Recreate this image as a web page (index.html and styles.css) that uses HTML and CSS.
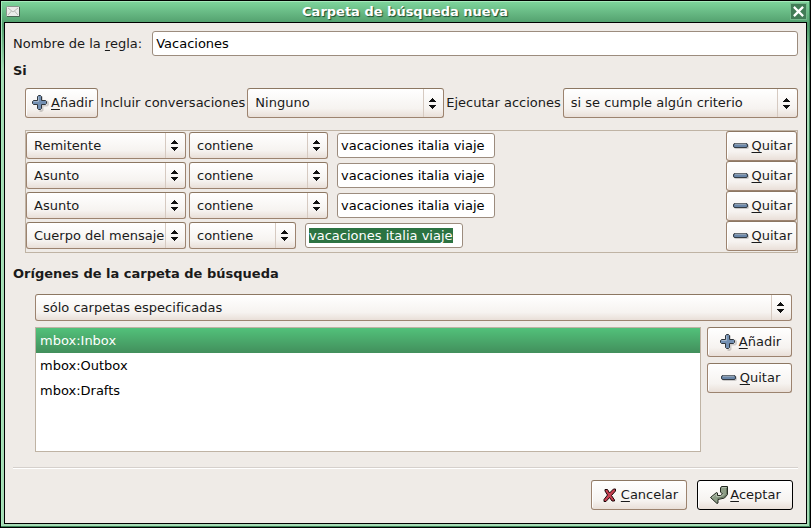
FILE: index.html
```html
<!DOCTYPE html>
<html lang="es">
<head>
<meta charset="utf-8">
<title>Carpeta de búsqueda nueva</title>
<link rel="stylesheet" href="styles.css">
</head>
<body>
<svg class="symbols" aria-hidden="true">
  <defs>
    <symbol id="plus" viewBox="0 0 18 18">
      <path d="M8 3.500h3v4h5l1 1v2l-1 1h-4.500V16l-1 1H8.500" fill="none" stroke="#000" stroke-opacity=".16" stroke-width="2"/>
      <path d="M7.500 1.500h2l1 1v4h4l1 1v2l-1 1h-4v4l-1 1h-2l-1-1v-4h-4l-1-1v-2l1-1h4v-4z" fill="#7390b3" stroke="#30363c"/>
      <path d="M7.500 3v4.500H3" fill="none" stroke="#a5b7cb"/>
    </symbol>
    <symbol id="minus" viewBox="0 0 18 18">
      <rect x="2" y="7" width="15" height="5" rx="2" fill="#000" fill-opacity=".18"/>
      <rect x="1.500" y="6.500" width="14" height="4" rx="1.500" fill="#6b87a9" stroke="#343b43"/>
      <path d="M3 7.500h11" stroke="#8fa0b3"/>
      <path d="M3 6.500h11" stroke="#666d75"/>
    </symbol>
  </defs>
</svg>
<main class="window">
  <header class="titlebar">
    <svg class="mail" viewBox="0 0 14 11" aria-hidden="true">
      <rect x=".5" y=".5" width="13" height="10" rx="1" fill="#ececea" stroke="#8b938c"/>
      <path d="M2 2l5 4 5-4M2 9l3.500-4M12 9L8.500 5" fill="none" stroke="#b9bab6"/>
      <path d="M1 10.500h12.500V1" fill="none" stroke="#4b6553"/>
    </svg>
    <h1>Carpeta de búsqueda nueva</h1>
    <button class="close" type="button" aria-label="Cerrar"><svg viewBox="0 0 16 16"><path d="M4 4l8 8M12 4l-8 8" stroke="#fff" stroke-width="2.500" stroke-linecap="square"/></svg></button>
  </header>
  <form class="content">
    <div class="name-row">
      <label for="rule">Nombre de la <u>r</u>egla:</label>
      <input id="rule" type="text" value="Vacaciones">
    </div>
    <h2>Si</h2>
    <div class="options">
      <button class="btn" type="button"><svg><use href="#plus"/></svg><span><u>A</u>ñadir</span></button>
      <label for="threads">Incluir conversaciones</label>
      <span class="combo threads"><select id="threads"><option>Ninguno</option></select></span>
      <label for="match">Ejecutar acciones</label>
      <span class="combo match"><select id="match"><option>si se cumple algún criterio</option></select></span>
    </div>
    <div class="rules">
      <div class="rule">
        <span class="combo field"><select aria-label="Campo"><option>Remitente</option></select></span>
        <span class="combo op"><select aria-label="Condición"><option>contiene</option></select></span>
        <input type="text" aria-label="Valor" value="vacaciones italia viaje">
        <button class="btn" type="button"><svg><use href="#minus"/></svg><span><u>Q</u>uitar</span></button>
      </div>
      <div class="rule">
        <span class="combo field"><select aria-label="Campo"><option>Asunto</option></select></span>
        <span class="combo op"><select aria-label="Condición"><option>contiene</option></select></span>
        <input type="text" aria-label="Valor" value="vacaciones italia viaje">
        <button class="btn" type="button"><svg><use href="#minus"/></svg><span><u>Q</u>uitar</span></button>
      </div>
      <div class="rule">
        <span class="combo field"><select aria-label="Campo"><option>Asunto</option></select></span>
        <span class="combo op"><select aria-label="Condición"><option>contiene</option></select></span>
        <input type="text" aria-label="Valor" value="vacaciones italia viaje">
        <button class="btn" type="button"><svg><use href="#minus"/></svg><span><u>Q</u>uitar</span></button>
      </div>
      <div class="rule">
        <span class="combo field"><select aria-label="Campo"><option>Cuerpo del mensaje</option></select></span>
        <span class="combo op-short"><select aria-label="Condición"><option>contiene</option></select></span>
        <input id="active" type="text" aria-label="Valor" value="vacaciones italia viaje">
        <button class="btn" type="button"><svg><use href="#minus"/></svg><span><u>Q</u>uitar</span></button>
      </div>
    </div>
    <h2>Orígenes de la carpeta de búsqueda</h2>
    <div class="sources">
      <span class="combo"><select aria-label="Orígenes"><option>sólo carpetas especificadas</option></select></span>
      <div class="folders">
        <ul class="list" role="listbox" aria-label="Carpetas">
          <li class="selected" role="option" aria-selected="true">mbox:Inbox</li>
          <li role="option">mbox:Outbox</li>
          <li role="option">mbox:Drafts</li>
        </ul>
        <div class="side">
          <button class="btn" type="button"><svg><use href="#plus"/></svg><span><u>A</u>ñadir</span></button>
          <button class="btn" type="button"><svg><use href="#minus"/></svg><span><u>Q</u>uitar</span></button>
        </div>
      </div>
    </div>
    <footer class="actions">
      <button class="btn" type="button">
        <svg viewBox="0 0 18 18"><path d="M4 3.500h2.500l2 3.500 4-4h2v2l-4 4.500 3 4.500v1H11L8.500 11.500 5 15.500H3v-2L6.500 9 4 5z" fill="#c63f50" stroke="#1c0507"/></svg>
        <span><u>C</u>ancelar</span></button>
      <button class="btn default" type="button">
        <svg viewBox="0 0 18 18"><path d="M11.500.500h6v8l-3 3.500-6.500 1.500v3.500l-1 .500L.500 11.500l6-5 1 .500v2.500h3l2-1.500-2-2v-4z" fill="#8c9d86" stroke="#20261e"/><path d="M12 1.500h4.500M2 11.500l4.500-3.500v2.500H11l2.500-2.500" fill="none" stroke="#b2bfad"/><path d="M16.500 2v6L14 11l-6.500 1.500" fill="none" stroke="#64745f"/></svg>
        <span><u>A</u>ceptar</span></button>
    </footer>
  </form>
</main>
<script src="script.js"></script>
</body>
</html>
```
FILE: styles.css
```css
* { box-sizing: border-box; }

body {
  margin: 0;
  background: #000;
  color: #1a1a1a;
  font: 13px/16px "DejaVu Sans", sans-serif;
}

.symbols { position: absolute; width: 0; height: 0; }

.window {
  display: flex;
  flex-direction: column;
  min-height: 100vh;
  border: 1px solid #000;
  background: linear-gradient(#7fd69d, #4e9a69 24px, #a5dbb5 68px);
  box-shadow: inset -1px -1px #3c8458, inset 1px 1px #a5e8bb;
  padding: 0 3px 3px;
}

.titlebar {
  display: flex;
  align-items: center;
  height: 21px;
  padding: 0 0 0 2px;
}

.titlebar h1 {
  flex: 1;
  margin: 0;
  color: #fff;
  font-size: 13px;
  line-height: 16px;
  text-align: center;
  text-shadow: 1px 1px 1px #1d4a2d;
}

.mail { width: 14px; height: 11px; }

.close {
  width: 17px;
  height: 17px;
  padding: 0;
  border: 1px solid #74b98c;
  background: #417c56;
}

.close svg { display: block; width: 15px; height: 15px; }

.content {
  display: flex;
  flex: 1;
  flex-direction: column;
  padding: 8px;
  border: 1px solid #000;
  background: #efebe7;
}

h2 { margin: 0; font-size: 13px; line-height: 16px; }

u { text-decoration-thickness: 1px; text-underline-offset: 2px; }

input, select, button { font: inherit; color: #000; }

input {
  width: 158px;
  height: 25px;
  padding: 0 3px;
  border: 1px solid #9c8c7e;
  border-radius: 3px;
  outline: 0;
  background: #fff;
}

input::selection { background: #2c7342; color: #fff; }

.btn {
  display: flex;
  align-items: center;
  justify-content: center;
  gap: 2px;
  height: 30px;
  padding: 0 4px 0 5px;
  border: 1px solid #9c836f;
  border-top-color: #8c7762;
  border-radius: 3px;
  background: linear-gradient(#fff, #f6f3f0 70%, #e9dfd8);
  box-shadow: inset 1px 1px #fff;
  color: #1a1a1a;
}

.btn svg { flex: none; width: 18px; height: 18px; }

.combo {
  display: grid;
  grid-template-columns: minmax(0, 1fr) 20px;
  height: 27px;
  border: 1px solid #9c836f;
  border-top-color: #8c7762;
  border-radius: 3px;
  background: linear-gradient(#fff, #f6f3f0 70%, #e9dfd8);
}

/* Stepper column with an up and a down arrow */
.combo::after {
  content: "";
  grid-area: 1 / 2;
  border-left: 1px solid #d6cac1;
  background:
    linear-gradient(#111, #111) 8px calc(50% - 5px) / 1px 1px no-repeat,
    linear-gradient(#111, #111) 7px calc(50% - 4px) / 3px 1px no-repeat,
    linear-gradient(#111, #111) 6px calc(50% - 3px) / 5px 1px no-repeat,
    linear-gradient(#111, #111) 5px calc(50% - 2px) / 7px 1px no-repeat,
    linear-gradient(#111, #111) 5px calc(50% + 2px) / 7px 1px no-repeat,
    linear-gradient(#111, #111) 6px calc(50% + 3px) / 5px 1px no-repeat,
    linear-gradient(#111, #111) 7px calc(50% + 4px) / 3px 1px no-repeat,
    linear-gradient(#111, #111) 8px calc(50% + 5px) / 1px 1px no-repeat;
  pointer-events: none;
}

.combo select {
  grid-area: 1 / 1 / 2 / 3;
  min-width: 0;
  padding: 0 0 0 7px;
  border: 0;
  outline: 0;
  appearance: none;
  background: none;
  color: #1a1a1a;
}

.name-row { display: flex; align-items: center; gap: 10px; margin-bottom: 7px; }
.name-row input { flex: 1; }

.options {
  display: flex;
  align-items: center;
  gap: 2px;
  margin: 9px 0 12px 12px;
}

.options .combo { height: 30px; }
.threads { flex: 198 1 0; }
.match { flex: 237 1 0; }

.rules {
  margin: 0 0 13px 12px;
  padding-bottom: 1px;
  border: 1px solid #bfb3a4;
}

.rule { display: flex; align-items: center; gap: 3px; }
.rule .combo, .rule input { margin-bottom: 1px; }
.rule .field { width: 160px; }
.rule .op { width: 139px; }
.rule .op-short { width: 107px; }
.rule input { margin-left: 6px; }
.rule .btn { margin-left: auto; }

.sources { margin: 12px 6px 15px 22px; }

.folders { display: flex; gap: 6px; margin-top: 6px; }

.list {
  flex: 1;
  min-height: 125px;
  margin: 0;
  padding: 0;
  border: 1px solid #bfb3a4;
  background: #fff;
  color: #000;
  list-style: none;
}

.list li { padding: 4px; line-height: 17px; }

.list .selected {
  background: linear-gradient(#52c17a, #428f5c);
  color: #fff;
}

.side { display: flex; flex-direction: column; gap: 6px; width: 85px; }

.actions {
  display: flex;
  justify-content: flex-end;
  gap: 10px;
  padding: 12px 5px 0 0;
  border-top: 1px solid #d5d0cc;
  box-shadow: inset 0 1px #fff;
}

.actions .btn { width: 96px; }
.actions .default { border-color: #000; }
```
FILE: script.js
```js
const active = document.getElementById("active");
active.focus();
active.select();
```
